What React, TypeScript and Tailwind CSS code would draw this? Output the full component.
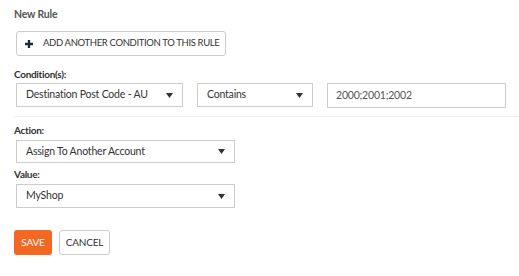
// New rule form — conditions, action and value

function Caret() {
  return (
    <svg width="7" height="5" viewBox="0 0 7 5" className="shrink-0">
      <path d="M0 0h7L3.5 5z" fill="#333" />
    </svg>
  );
}

function Select({ value, className }: { value: string; className: string }) {
  return (
    <div
      className={`flex items-center justify-between whitespace-nowrap border border-[#ccc] bg-white pl-[9px] pr-[9px] text-[10.5px] tracking-[-0.2px] text-[#333] ${className}`}
    >
      <span>{value}</span>
      <Caret />
    </div>
  );
}

export default function App() {
  return (
    <div className="w-[519px] h-[276px] bg-white font-['Lato',sans-serif] pt-[6px]">
      <div className="pl-[14px] text-[10.5px] tracking-[-0.2px] font-bold text-[#555] leading-[16px]">New Rule</div>

      <div className="pl-[16px] mt-[9px]">
        <button className="flex items-center h-[25px] w-[210px] whitespace-nowrap border border-[#ccc] rounded-[3px] bg-white pl-[8px] text-[9.5px] tracking-[-0.35px] text-[#333]">
          <svg width="8" height="8" viewBox="0 0 9 9" className="mr-[10px] shrink-0">
            <path d="M3.2 0h2.6v3.2H9v2.6H5.8V9H3.2V5.8H0V3.2h3.2z" fill="#1f2937" />
          </svg>
          ADD ANOTHER CONDITION TO THIS RULE
        </button>
      </div>

      <div className="pl-[14px] mt-[11px] text-[10px] tracking-[-0.3px] font-bold text-[#333] leading-[14px]">
        Condition(s):
      </div>
      <div className="flex items-start pl-[16px] mt-[2px]">
        <Select value="Destination Post Code - AU" className="w-[167px] h-[24px]" />
        <Select value="Contains" className="w-[116px] h-[24px] ml-[14px]" />
        <div className="ml-[14px] flex items-center w-[179px] h-[25px] border border-[#ccc] pl-[8px] text-[10.5px] tracking-[-0.2px] text-[#555]">
          2000;2001;2002
        </div>
      </div>

      <div className="ml-[14px] mt-[8px] border-t border-[#eee]" />

      <div className="pl-[14px] mt-[6px] text-[10px] tracking-[-0.3px] font-bold text-[#333] leading-[14px]">Action:</div>
      <div className="pl-[16px] mt-[3px]">
        <Select value="Assign To Another Account" className="w-[219px] h-[23px]" />
      </div>
      <div className="pl-[14px] mt-[4px] text-[10px] tracking-[-0.3px] font-bold text-[#333] leading-[14px]">Value:</div>
      <div className="pl-[16px] mt-[3px]">
        <Select value="MyShop" className="w-[219px] h-[24px]" />
      </div>

      <div className="flex pl-[14px] mt-[22px] gap-[7px]">
        <button className="h-[25px] w-[38px] rounded-[3px] bg-[#f26722] text-white text-[10px] tracking-[-0.2px]">
          SAVE
        </button>
        <button className="h-[25px] w-[51px] rounded-[3px] border border-[#ccc] bg-white text-[#333] text-[10px] tracking-[-0.2px]">
          CANCEL
        </button>
      </div>
    </div>
  );
}
